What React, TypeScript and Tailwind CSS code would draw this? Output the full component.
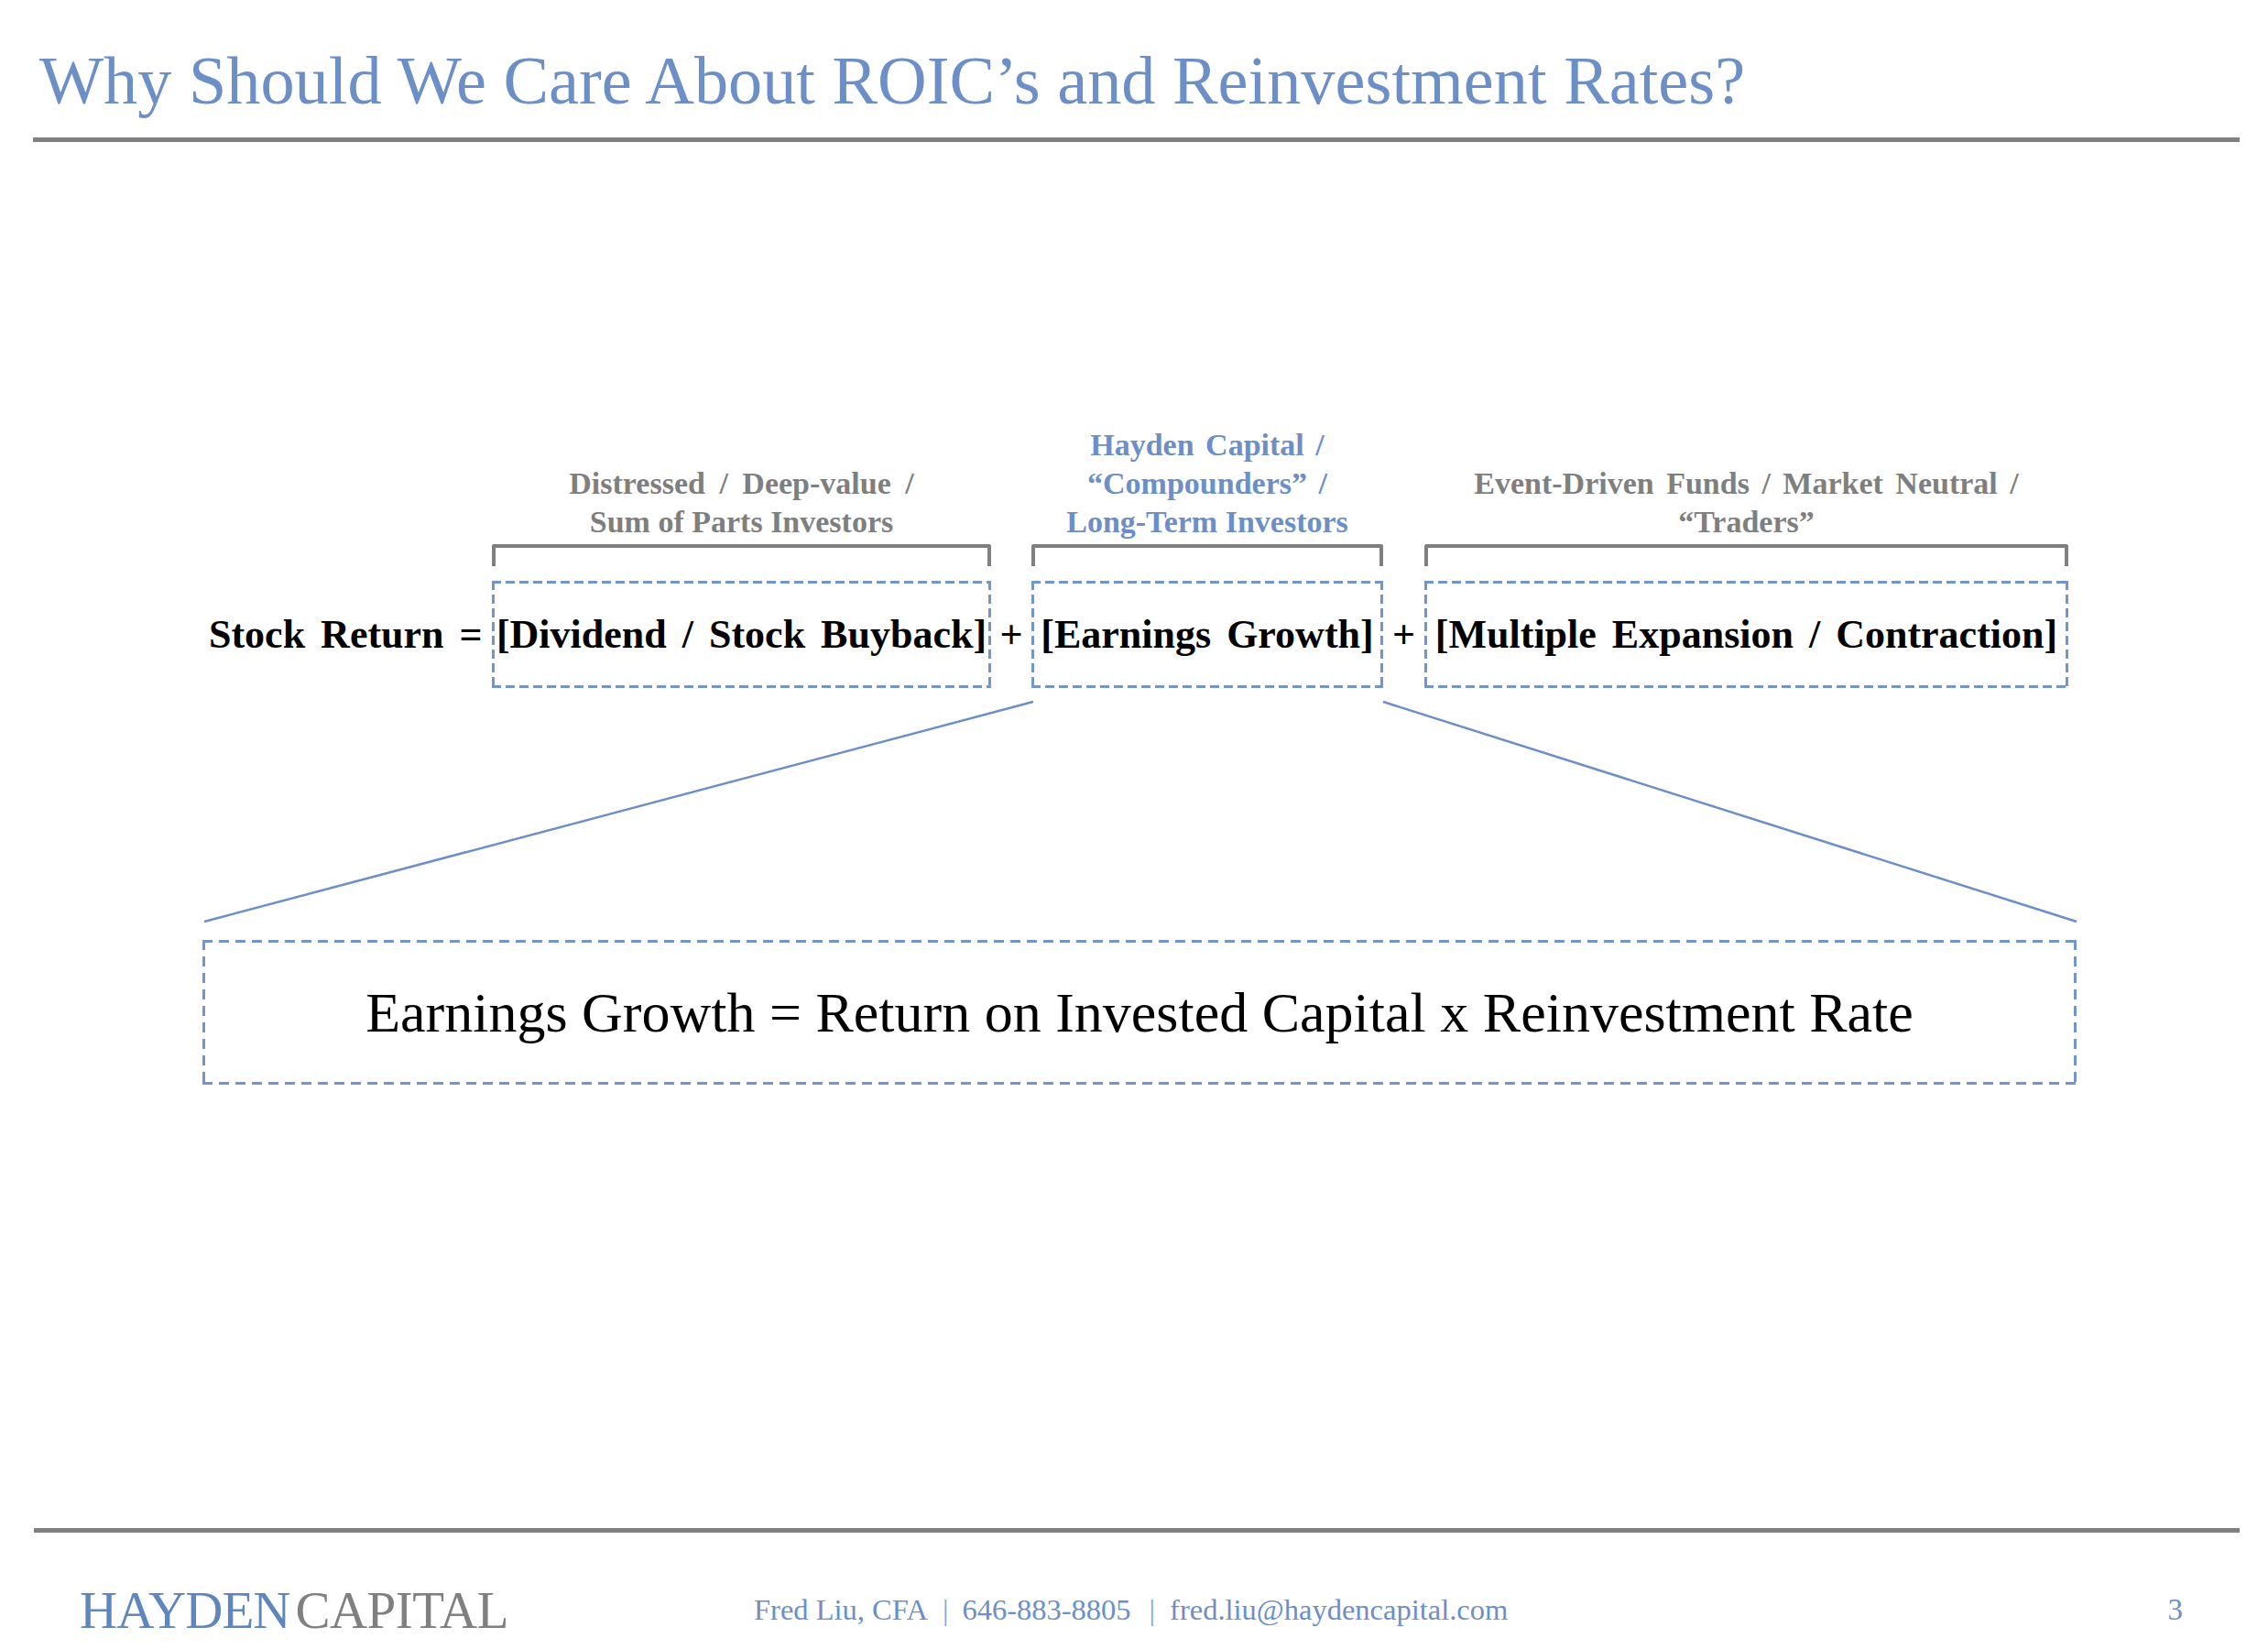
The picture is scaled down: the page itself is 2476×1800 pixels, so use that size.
import React from "react";

const serif = "font-['Liberation_Serif','Times_New_Roman',serif]";

const dashedSmall =
  "bg-no-repeat [background-image:repeating-linear-gradient(90deg,#7396ca_0_10px,transparent_10px_15px),repeating-linear-gradient(90deg,#7396ca_0_10px,transparent_10px_15px),repeating-linear-gradient(180deg,#7396ca_0_10px,transparent_10px_15px),repeating-linear-gradient(180deg,#7396ca_0_10px,transparent_10px_15px)] [background-size:100%_3px,100%_3px,3px_100%,3px_100%] [background-position:0_0,0_100%,0_0,100%_0]";

const dashedLarge =
  "bg-no-repeat [background-image:repeating-linear-gradient(90deg,#7396ca_0_11px,transparent_11px_18px),repeating-linear-gradient(90deg,#7396ca_0_11px,transparent_11px_18px),repeating-linear-gradient(180deg,#7396ca_0_11px,transparent_11px_18px),repeating-linear-gradient(180deg,#7396ca_0_11px,transparent_11px_18px)] [background-size:100%_3px,100%_3px,3px_100%,3px_100%] [background-position:0_0,0_100%,0_0,100%_0]";

function Column({
  width,
  lines,
  color,
  main,
}: {
  width: string;
  lines: { text: string; ws: string }[];
  color: string;
  main: string;
}) {
  return (
    <div className={`${width} flex flex-col`}>
      <div className={`flex flex-col items-center text-[34px] leading-[42px] font-bold ${color} mb-[3px]`}>
        {lines.map((l) => (
          <div key={l.text} className={`whitespace-nowrap ${l.ws}`}>
            {l.text}
          </div>
        ))}
      </div>
      <div className="h-[24px] border-x-4 border-t-4 border-[#7f7f7f] rounded-t-[3px] mb-[16px]" />
      <div className={`h-[117px] ${dashedSmall} flex items-center justify-center`}>
        <span className="text-[44px] leading-none font-bold text-black whitespace-nowrap [word-spacing:6px]">{main}</span>
      </div>
    </div>
  );
}

function Plus({ width }: { width: string }) {
  return (
    <div className={`${width} h-[117px] flex items-center justify-center text-[44px] leading-none font-bold text-black`}>
      +
    </div>
  );
}

export default function App() {
  return (
    <div className={`w-[2476px] h-[1800px] bg-white overflow-hidden ${serif} flex flex-col`}>
      {/* Title */}
      <div className="pt-[51px] pl-[43px] text-[74.3px] leading-none text-[#6b8fc6] whitespace-nowrap">
        Why Should We Care About ROIC’s and Reinvestment Rates?
      </div>
      <div className="mt-[25px] ml-[36px] w-[2409px] h-[5px] bg-[#808080]" />

      {/* Equation row */}
      <div className="mt-[310px] pl-[228px] flex items-end">
        <div className="w-[309px] h-[117px] flex items-center">
          <span className="text-[44px] leading-none font-bold text-black whitespace-nowrap [word-spacing:6px]">
            Stock Return =
          </span>
        </div>
        <Column
          width="w-[545px]"
          lines={[
            { text: "Distressed / Deep-value /", ws: "[word-spacing:7px]" },
            { text: "Sum of Parts Investors", ws: "" },
          ]}
          color="text-[#7f7f7f]"
          main="[Dividend / Stock Buyback]"
        />
        <Plus width="w-[44px]" />
        <Column
          width="w-[384px]"
          lines={[
            { text: "Hayden Capital /", ws: "[word-spacing:4px]" },
            { text: "“Compounders” /", ws: "[word-spacing:4px]" },
            { text: "Long-Term Investors", ws: "" },
          ]}
          color="text-[#6b8fc6]"
          main="[Earnings Growth]"
        />
        <Plus width="w-[45px]" />
        <Column
          width="w-[703px]"
          lines={[
            { text: "Event-Driven Funds / Market Neutral /", ws: "[word-spacing:5px]" },
            { text: "“Traders”", ws: "" },
          ]}
          color="text-[#7f7f7f]"
          main="[Multiple Expansion / Contraction]"
        />
      </div>

      {/* Connector lines */}
      <svg className="block" width="2476" height="275" viewBox="0 0 2476 275">
        <line x1="1128" y1="15" x2="223" y2="255" stroke="#6b8fc6" strokeWidth="2.5" />
        <line x1="1510" y1="15" x2="2267" y2="255" stroke="#6b8fc6" strokeWidth="2.5" />
      </svg>

      {/* Bottom formula */}
      <div className={`ml-[221px] w-[2046px] h-[158px] ${dashedLarge} flex items-center justify-center`}>
        <span className="text-[62px] leading-none text-black whitespace-nowrap">
          Earnings Growth = Return on Invested Capital x Reinvestment Rate
        </span>
      </div>

      {/* Footer */}
      <div className="mt-[484px] ml-[37px] w-[2408px] h-[5px] bg-[#808080]" />
      <div className="flex items-start">
        <div className="w-[823px] pl-[87px] pt-[56px] flex text-[57px] leading-none whitespace-nowrap">
          <span className="text-[#5f86be] tracking-[-1px]">HAYDEN</span>
          <span className="ml-[6px] text-[#808080] tracking-[-0.5px]">CAPITAL</span>
        </div>
        <div className="pt-[68px] flex text-[32.5px] leading-none text-[#6b8fc6] whitespace-nowrap">
          <span>Fred Liu, CFA</span>
          <span className="ml-[16px] mr-[15px] text-[#8aa3c9]">|</span>
          <span>646-883-8805</span>
          <span className="ml-[20px] mr-[16px] text-[#8aa3c9]">|</span>
          <span>fred.liu@haydencapital.com</span>
        </div>
        <div className="ml-auto mr-[93px] pt-[68px] text-[33px] leading-none text-[#6b8fc6]">3</div>
      </div>
    </div>
  );
}
